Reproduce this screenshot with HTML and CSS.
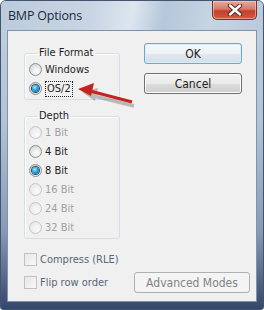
FILE: index.html
```html
<!DOCTYPE html>
<html lang="en">
<head>
  <meta charset="UTF-8">
  <title>BMP Options</title>
  <link rel="stylesheet" href="styles.css">
</head>
<body>
  <div class="window">
    <div class="titlebar">
      <span class="title">BMP Options</span>
      <span class="close">
        <svg width="18" height="12" viewBox="0 0 18 12">
          <path d="M4 1.5 L14 10.5 M14 1.5 L4 10.5" stroke="#5a2620" stroke-width="4.4" stroke-linecap="round"/>
          <path d="M4 1.5 L14 10.5 M14 1.5 L4 10.5" stroke="#ffffff" stroke-width="2.4" stroke-linecap="round"/>
        </svg>
      </span>
    </div>

    <div class="client">
      <div class="left">
        <fieldset class="group">
          <legend>File Format</legend>
          <div class="opt"><span class="radio"></span>Windows</div>
          <div class="opt"><span class="radio on"></span><span class="focus">OS/2</span></div>
        </fieldset>

        <fieldset class="group depth">
          <legend>Depth</legend>
          <div class="opt off"><span class="radio"></span>1 Bit</div>
          <div class="opt"><span class="radio"></span>4 Bit</div>
          <div class="opt"><span class="radio on"></span>8 Bit</div>
          <div class="opt off"><span class="radio"></span>16 Bit</div>
          <div class="opt off"><span class="radio"></span>24 Bit</div>
          <div class="opt off"><span class="radio"></span>32 Bit</div>
        </fieldset>

        <div class="check first"><span class="box"></span>Compress (RLE)</div>
        <div class="check"><span class="box"></span>Flip row order</div>
      </div>

      <div class="right">
        <button class="btn default">OK</button>
        <button class="btn">Cancel</button>
        <button class="btn disabled">Advanced Modes</button>
      </div>
    </div>

    <!-- red pointer drawn over the dialog -->
    <svg class="arrow" width="64" height="30" viewBox="0 0 64 30">
      <g transform="translate(2,3)" opacity="0.35">
        <path d="M58 22 L18 12" stroke="#555" stroke-width="3.5"/>
        <path d="M6 8 L22 4 L19 17 Z" fill="#555"/>
      </g>
      <path d="M58 21 L16 10" stroke="#c4241f" stroke-width="3.2"/>
      <path d="M4 8 L20 2 L17 15 Z" fill="#c4241f"/>
    </svg>
  </div>
</body>
</html>
```

FILE: styles.css
```css
* {
  box-sizing: border-box;
}

body {
  margin: 0;
  font-family: "DejaVu Sans Condensed", "DejaVu Sans", sans-serif;
  font-size: 11px;
  color: #1e1e1e;
}

.window {
  position: relative;
  width: 264px;
  height: 310px;
  border: 1px solid #44536e;
  border-radius: 6px 6px 3px 3px;
  background: linear-gradient(to bottom, #c2d0e0 0%, #b1c3d8 40%, #8699b6 75%, #34476c 100%);
  overflow: hidden;
}

.titlebar {
  height: 29px;
  display: flex;
  justify-content: space-between;
  align-items: flex-start;
  background: linear-gradient(100deg, #bccbdc 0%, #c8d5e3 35%, #dde6ef 50%, #b5c7da 62%, #c7d4e2 80%, #b9c9db 100%);
}

.title {
  padding: 6px 0 0 7px;
  font-family: "Open Sans", sans-serif;
  font-size: 12.5px;
  color: #1b2a3a;
  letter-spacing: -0.2px;
}

.close {
  width: 45px;
  height: 19px;
  margin-right: 6px;
  display: flex;
  justify-content: center;
  align-items: center;
  border: 1px solid #7e3025;
  border-top: none;
  border-radius: 0 0 5px 5px;
  background: linear-gradient(to bottom, #e9a799 0%, #d77a69 45%, #c1412c 55%, #d55a41 100%);
  box-shadow: inset 0 0 0 1px rgba(255, 220, 210, 0.5);
}

.client {
  display: flex;
  height: 272px;
  margin: 0 6px;
  background: #f0f0f0;
  border: 1px solid #8392ab;
}

.left {
  width: 122px;
  padding: 15px 0 0 16px;
}

.group {
  width: 96px;
  margin: 0 0 9px 0;
  padding: 0 0 1px 4px;
  border: 1px solid #d5dfe5;
  border-radius: 3px;
  box-shadow: inset 1px 1px 0 #fff;
}

.group legend {
  padding: 0 2px;
  margin-left: 8px;
  line-height: 14px;
}

.opt {
  display: flex;
  align-items: center;
  height: 19px;
}

.opt.off {
  color: #a0a0a0;
}

.radio {
  width: 13px;
  height: 13px;
  margin-right: 3px;
  border: 1px solid #8e8f8f;
  border-radius: 50%;
  background: radial-gradient(circle at 60% 65%, #ffffff 0%, #e8e8e8 45%, #c8c8c8 100%);
  display: flex;
  justify-content: center;
  align-items: center;
}

.off .radio {
  border-color: #c6c6c6;
  background: radial-gradient(circle at 60% 65%, #fafafa 0%, #ececec 60%, #dedede 100%);
}

.radio.on::after {
  content: "";
  width: 7px;
  height: 7px;
  border-radius: 50%;
  background: radial-gradient(circle at 40% 35%, #9ff0ff 0%, #2aa2d8 45%, #0f4f85 100%);
  box-shadow: 0 0 0 1px #1b4d72;
}

.focus {
  padding: 0 1px;
  border: 1px dotted #222;
  line-height: 14px;
}

.check {
  display: flex;
  align-items: center;
  height: 23px;
  color: #5a6675;
}

.check.first {
  margin-top: 3px;
}

.box {
  width: 13px;
  height: 13px;
  margin-right: 3px;
  border: 1px solid #c2c2c2;
  background: linear-gradient(135deg, #e6e6e6, #f8f8f8);
}

.right {
  flex: 1;
  display: flex;
  flex-direction: column;
  align-items: flex-end;
  padding: 12px 6px 8px 0;
}

.btn {
  width: 98px;
  height: 21px;
  margin: 0 8px 9px 0;
  padding: 0;
  font-family: inherit;
  font-size: 12px;
  color: #1e1e1e;
  border: 1px solid #707070;
  border-radius: 3px;
  background: linear-gradient(to bottom, #f2f2f2 0%, #ebebeb 50%, #dddddd 51%, #cfcfcf 100%);
  box-shadow: inset 0 0 0 1px #fcfcfc;
}

.btn.default {
  border-color: #6fa7d3;
  box-shadow: inset 0 0 0 1px #d4eefc;
  background: linear-gradient(to bottom, #f4f8fb 0%, #edf2f6 50%, #e1e8ee 51%, #d6dfe6 100%);
}

.btn.disabled {
  width: 116px;
  margin: auto 0 0 0;
  color: #838383;
  border-color: #adb2b5;
  background: #f4f4f4;
  box-shadow: none;
}

.arrow {
  position: absolute;
  left: 73px;
  top: 80px;
}
```
